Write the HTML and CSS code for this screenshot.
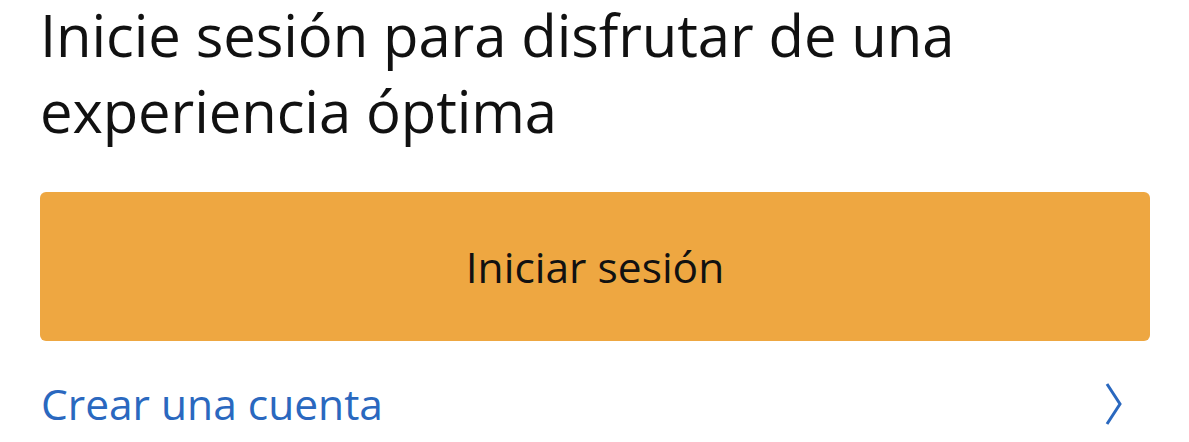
FILE: index.html
```html
<!DOCTYPE html>
<html lang="es">
<head>
<meta charset="utf-8">
<link rel="stylesheet" href="styles.css">
</head>
<body>
<main class="page">
  <h1 class="title">Inicie sesión para disfrutar de una experiencia óptima</h1>
  <button class="signin">Iniciar sesión</button>
  <a class="create" href="#">
    <span>Crear una cuenta</span>
    <svg class="chev" width="20" height="44" viewBox="0 0 20 44"><path d="M3 2 L16 22 L3 42" fill="none" stroke="#2a68bf" stroke-width="3"/></svg>
  </a>
</main>
</body>
</html>
```
FILE: styles.css
```css
html, body { margin: 0; padding: 0; background: #fff; }
body { font-family: "Open Sans", "Noto Sans", sans-serif; color: #111; overflow: hidden; }
.page { padding: 0 39px 0 40px; display: flex; flex-direction: column; }
.title { margin: -3px 0 0; font-weight: 400; font-size: 58px; line-height: 76px; letter-spacing: -0.1px; }
.signin { margin-top: 43px; height: 149px; border: none; border-radius: 6px; background: #eea741; font-family: inherit; font-size: 42.5px; color: #111; }
.create { margin-top: 34px; display: flex; justify-content: space-between; align-items: center; text-decoration: none; color: #2a68bf; font-size: 42.5px; padding-right: 26px; padding-left: 1px; }
.chev { display: block; }
```
